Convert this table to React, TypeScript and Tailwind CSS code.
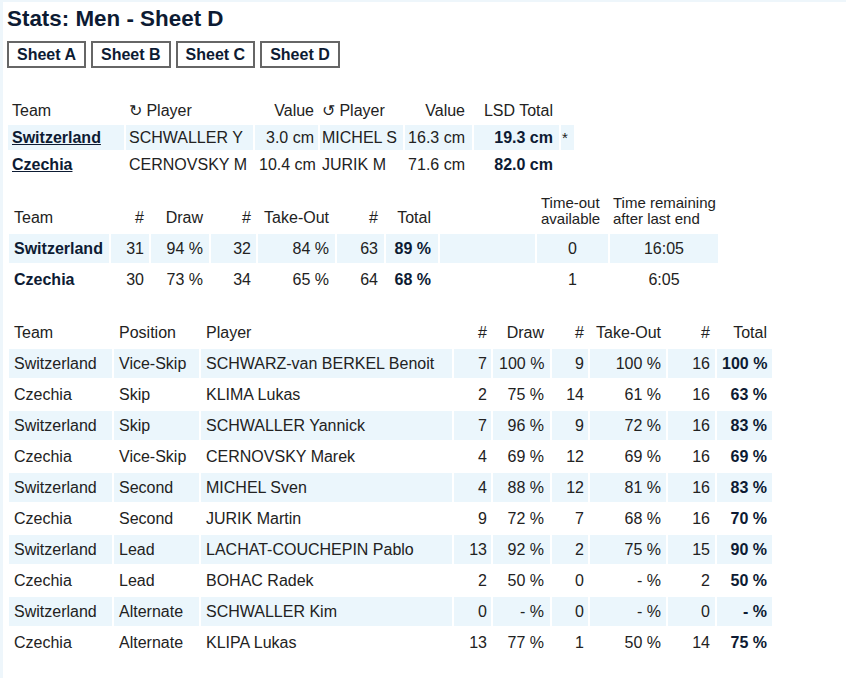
import React from "react";

const lsd = [
  { team: "Switzerland", p1: "SCHWALLER Y", v1: "3.0 cm", p2: "MICHEL S", v2: "16.3 cm", total: "19.3 cm", star: "*" },
  { team: "Czechia", p1: "CERNOVSKY M", v1: "10.4 cm", p2: "JURIK M", v2: "71.6 cm", total: "82.0 cm", star: "" },
];

const teams = [
  { team: "Switzerland", dn: 31, dp: "94 %", tn: 32, tp: "84 %", n: 63, total: "89 %", timeouts: 0, time: "16:05" },
  { team: "Czechia", dn: 30, dp: "73 %", tn: 34, tp: "65 %", n: 64, total: "68 %", timeouts: 1, time: "6:05" },
];

const players = [
  ["Switzerland", "Vice-Skip", "SCHWARZ-van BERKEL Benoit", "7", "100 %", "9", "100 %", "16", "100 %"],
  ["Czechia", "Skip", "KLIMA Lukas", "2", "75 %", "14", "61 %", "16", "63 %"],
  ["Switzerland", "Skip", "SCHWALLER Yannick", "7", "96 %", "9", "72 %", "16", "83 %"],
  ["Czechia", "Vice-Skip", "CERNOVSKY Marek", "4", "69 %", "12", "69 %", "16", "69 %"],
  ["Switzerland", "Second", "MICHEL Sven", "4", "88 %", "12", "81 %", "16", "83 %"],
  ["Czechia", "Second", "JURIK Martin", "9", "72 %", "7", "68 %", "16", "70 %"],
  ["Switzerland", "Lead", "LACHAT-COUCHEPIN Pablo", "13", "92 %", "2", "75 %", "15", "90 %"],
  ["Czechia", "Lead", "BOHAC Radek", "2", "50 %", "0", "- %", "2", "50 %"],
  ["Switzerland", "Alternate", "SCHWALLER Kim", "0", "- %", "0", "- %", "0", "- %"],
  ["Czechia", "Alternate", "KLIPA Lukas", "13", "77 %", "1", "50 %", "14", "75 %"],
];

const th = "p-0 font-normal whitespace-nowrap";
const stripe = (i: number) => (i % 2 === 0 ? "bg-[#ebf6fc]" : "");

export default function App() {
  return (
    <div className="min-h-screen bg-[#eef6fb] pl-[3px] pt-[2px] font-['Liberation_Sans',Arial,sans-serif] text-[16px] text-[#222]">
      <div className="min-h-[676px] bg-white pl-[4px] pt-[4px]">
        <h1 className="text-[22.4px] font-bold leading-[26px] text-[#0d1b33]">Stats: Men - Sheet D</h1>

        <div className="mt-[9px] flex gap-[5px]">
          {["Sheet A", "Sheet B", "Sheet C", "Sheet D"].map((s) => (
            <button
              key={s}
              type="button"
              className="border-2 border-[#666] bg-white px-[8px] py-[2px] text-[16px] font-bold leading-[19px] text-[#0d1b33]"
            >
              {s}
            </button>
          ))}
        </div>

        {/* LSD */}
        <table className="-ml-px mt-[28px] w-[570px] table-fixed border-separate border-spacing-[2px] leading-[19px]">
          <thead>
            <tr>
              <th className={`${th} w-[116px] px-[4px] py-[3px] text-left`}>Team</th>
              <th className={`${th} w-[127px] px-[3px] py-[3px] text-left`}>↻ Player</th>
              <th className={`${th} w-[63px] px-[4px] py-[3px] text-right`}>Value</th>
              <th className={`${th} w-[83px] px-[2px] py-[3px] text-left`}>↺ Player</th>
              <th className={`${th} w-[67px] pl-[2px] pr-[7px] py-[3px] text-right`}>Value</th>
              <th className={`${th} w-[85px] px-[6px] py-[3px] text-right`}>LSD Total</th>
              <th className={`${th} w-[13px]`}></th>
            </tr>
          </thead>
          <tbody>
            {lsd.map((r, i) => (
              <tr key={r.team} className={stripe(i)}>
                <td className="px-[4px] py-[3px] font-bold whitespace-nowrap text-[#0d1b33] underline">{r.team}</td>
                <td className="px-[3px] py-[3px] whitespace-nowrap">{r.p1}</td>
                <td className="px-[4px] py-[3px] text-right whitespace-nowrap">{r.v1}</td>
                <td className="px-[2px] py-[3px] whitespace-nowrap">{r.p2}</td>
                <td className="pl-[2px] pr-[7px] py-[3px] text-right whitespace-nowrap">{r.v2}</td>
                <td className="px-[6px] py-[3px] text-right font-bold whitespace-nowrap text-[#0d1b33]">{r.total}</td>
                <td className="px-[1px] py-[3px] text-[15px]">{r.star}</td>
              </tr>
            ))}
          </tbody>
        </table>

        {/* Team totals */}
        <table className="mt-[9px] w-[713px] table-fixed border-separate border-spacing-[2px] leading-[19px]">
          <thead>
            <tr className="align-bottom">
              <th className={`${th} w-[100px] px-[5px] py-[5px] text-left`}>Team</th>
              <th className={`${th} w-[38px] px-[5px] py-[5px] text-right`}>#</th>
              <th className={`${th} w-[58px] px-[6px] py-[5px] text-right`}>Draw</th>
              <th className={`${th} w-[45px] px-[5px] py-[5px] text-right`}>#</th>
              <th className={`${th} w-[77px] px-[6px] py-[5px] text-right`}>Take-Out</th>
              <th className={`${th} w-[47px] px-[6px] py-[5px] text-right`}>#</th>
              <th className={`${th} w-[52px] px-[7px] py-[5px] text-right`}>Total</th>
              <th className={`${th} w-[95px]`}></th>
              <th className={`${th} w-[71px] px-[4px] py-[5px] text-left text-[15px] leading-[16px]`}>
                Time-out
                <br />
                available
              </th>
              <th className={`${th} w-[108px] px-[3px] py-[5px] text-left text-[15px] leading-[16px]`}>
                Time remaining
                <br />
                after last end
              </th>
            </tr>
          </thead>
          <tbody>
            {teams.map((r, i) => (
              <tr key={r.team} className={stripe(i)}>
                <td className="px-[5px] py-[5px] font-bold whitespace-nowrap text-[#0d1b33]">{r.team}</td>
                <td className="px-[5px] py-[5px] text-right">{r.dn}</td>
                <td className="px-[6px] py-[5px] text-right whitespace-nowrap">{r.dp}</td>
                <td className="px-[5px] py-[5px] text-right">{r.tn}</td>
                <td className="px-[6px] py-[5px] text-right whitespace-nowrap">{r.tp}</td>
                <td className="px-[6px] py-[5px] text-right">{r.n}</td>
                <td className="px-[7px] py-[5px] text-right font-bold whitespace-nowrap text-[#0d1b33]">{r.total}</td>
                <td className="py-[5px]"></td>
                <td className="px-[4px] py-[5px] text-center">{r.timeouts}</td>
                <td className="px-[4px] py-[5px] text-center">{r.time}</td>
              </tr>
            ))}
          </tbody>
        </table>

        {/* Players */}
        <table className="mt-[20px] w-[767px] table-fixed border-separate border-spacing-[2px] leading-[19px]">
          <thead>
            <tr>
              <th className={`${th} w-[103px] px-[5px] py-[5px] text-left`}>Team</th>
              <th className={`${th} w-[85px] px-[5px] py-[5px] text-left`}>Position</th>
              <th className={`${th} w-[251px] px-[5px] py-[5px] text-left`}>Player</th>
              <th className={`${th} w-[37px] px-[4px] py-[5px] text-right`}>#</th>
              <th className={`${th} w-[57px] px-[6px] py-[5px] text-right`}>Draw</th>
              <th className={`${th} w-[36px] px-[4px] py-[5px] text-right`}>#</th>
              <th className={`${th} w-[76px] px-[5px] py-[5px] text-right`}>Take-Out</th>
              <th className={`${th} w-[47px] px-[5px] py-[5px] text-right`}>#</th>
              <th className={`${th} w-[55px] px-[5px] py-[5px] text-right`}>Total</th>
            </tr>
          </thead>
          <tbody>
            {players.map((r, i) => (
              <tr key={r[2]} className={stripe(i)}>
                <td className="px-[5px] py-[5px] whitespace-nowrap">{r[0]}</td>
                <td className="px-[5px] py-[5px] whitespace-nowrap">{r[1]}</td>
                <td className="px-[5px] py-[5px] whitespace-nowrap">{r[2]}</td>
                <td className="px-[4px] py-[5px] text-right">{r[3]}</td>
                <td className="px-[6px] py-[5px] text-right whitespace-nowrap">{r[4]}</td>
                <td className="px-[4px] py-[5px] text-right">{r[5]}</td>
                <td className="px-[5px] py-[5px] text-right whitespace-nowrap">{r[6]}</td>
                <td className="px-[5px] py-[5px] text-right">{r[7]}</td>
                <td className="px-[5px] py-[5px] text-right font-bold whitespace-nowrap text-[#0d1b33]">{r[8]}</td>
              </tr>
            ))}
          </tbody>
        </table>
      </div>
    </div>
  );
}
